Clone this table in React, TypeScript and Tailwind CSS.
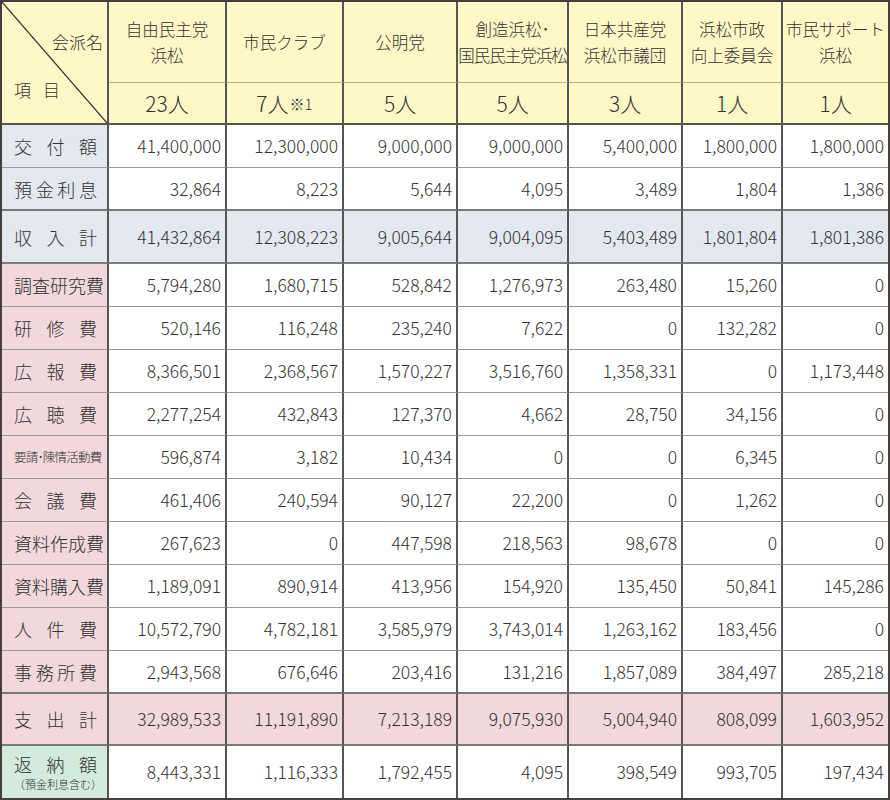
import React from "react";

type RowKind = "base" | "income" | "expense" | "expenseTotal" | "refund";

interface Row {
  label: string;
  kind: RowKind;
  values: string[];
  thick?: boolean;
  note?: string;
  small?: boolean;
}

const parties = [
  ["自由民主党", "浜松"],
  ["市民クラブ"],
  ["公明党"],
  ["創造浜松･", "国民民主党浜松"],
  ["日本共産党", "浜松市議団"],
  ["浜松市政", "向上委員会"],
  ["市民サポート", "浜松"],
];

const members = ["23", "7", "5", "5", "3", "1", "1"];

const rows: Row[] = [
  { label: "交付額", kind: "base", values: ["41,400,000", "12,300,000", "9,000,000", "9,000,000", "5,400,000", "1,800,000", "1,800,000"] },
  { label: "預金利息", kind: "base", thick: true, values: ["32,864", "8,223", "5,644", "4,095", "3,489", "1,804", "1,386"] },
  { label: "収入計", kind: "income", thick: true, values: ["41,432,864", "12,308,223", "9,005,644", "9,004,095", "5,403,489", "1,801,804", "1,801,386"] },
  { label: "調査研究費", kind: "expense", values: ["5,794,280", "1,680,715", "528,842", "1,276,973", "263,480", "15,260", "0"] },
  { label: "研修費", kind: "expense", values: ["520,146", "116,248", "235,240", "7,622", "0", "132,282", "0"] },
  { label: "広報費", kind: "expense", values: ["8,366,501", "2,368,567", "1,570,227", "3,516,760", "1,358,331", "0", "1,173,448"] },
  { label: "広聴費", kind: "expense", values: ["2,277,254", "432,843", "127,370", "4,662", "28,750", "34,156", "0"] },
  { label: "要請･陳情活動費", kind: "expense", small: true, values: ["596,874", "3,182", "10,434", "0", "0", "6,345", "0"] },
  { label: "会議費", kind: "expense", values: ["461,406", "240,594", "90,127", "22,200", "0", "1,262", "0"] },
  { label: "資料作成費", kind: "expense", values: ["267,623", "0", "447,598", "218,563", "98,678", "0", "0"] },
  { label: "資料購入費", kind: "expense", values: ["1,189,091", "890,914", "413,956", "154,920", "135,450", "50,841", "145,286"] },
  { label: "人件費", kind: "expense", values: ["10,572,790", "4,782,181", "3,585,979", "3,743,014", "1,263,162", "183,456", "0"] },
  { label: "事務所費", kind: "expense", thick: true, values: ["2,943,568", "676,646", "203,416", "131,216", "1,857,089", "384,497", "285,218"] },
  { label: "支出計", kind: "expenseTotal", thick: true, values: ["32,989,533", "11,191,890", "7,213,189", "9,075,930", "5,004,940", "808,099", "1,603,952"] },
  { label: "返納額", kind: "refund", note: "（預金利息含む）", values: ["8,443,331", "1,116,333", "1,792,455", "4,095", "398,549", "993,705", "197,434"] },
];

const labelBg: Record<RowKind, string> = {
  base: "bg-[#e3e8ef]",
  income: "bg-[#e3e8ef]",
  expense: "bg-[#f1d8dd]",
  expenseTotal: "bg-[#f1d8dd]",
  refund: "bg-[#d4eadc]",
};

const valueBg: Record<RowKind, string> = {
  base: "bg-white",
  income: "bg-[#e3e8ef]",
  expense: "bg-white",
  expenseTotal: "bg-[#f1d8dd]",
  refund: "bg-white",
};

function SpreadLabel({ text }: { text: string }) {
  return (
    <div className="flex justify-between pl-[12px] pr-[10px] text-[18px] leading-none">
      {text.split("").map((c, i) => (
        <span key={i}>{c}</span>
      ))}
    </div>
  );
}

export default function App() {
  const font = { fontFamily: '"Noto Sans CJK JP", "Noto Sans", sans-serif' };

  return (
    <div className="w-[890px] bg-white text-[#333]" style={font}>
      <div className="grid grid-cols-[107px_118px_117px_114px_111px_114px_100px_105px] grid-rows-[81px_42px_43px_43px_53px_repeat(10,43px)_52px_52px] border-2 border-[#463d3d] font-light">
        {/* corner cell */}
        <div className="relative row-span-2 bg-[#fef8c6] border-r-2 border-r-[#555] border-b-2 border-b-[#555]">
          <svg className="absolute inset-0 h-full w-full" preserveAspectRatio="none" viewBox="0 0 100 100">
            <line x1="0" y1="0" x2="100" y2="100" stroke="#333" strokeWidth="1.2" vectorEffect="non-scaling-stroke" />
          </svg>
          <span className="absolute right-[4px] top-[31px] text-[17px] leading-none">会派名</span>
          <span className="absolute left-[12px] top-[79px] text-[17px] leading-none tracking-[12px]">項目</span>
        </div>

        {parties.map((p, i) => (
          <div
            key={i}
            className={`flex flex-col items-center justify-center bg-[#fef8c6] border-b border-b-[#b5b08c] text-[16.5px] leading-[26px] whitespace-nowrap ${i < 6 ? "border-r-2 border-r-[#555]" : ""}`}
          >
            {p.map((line, j) => (
              <span key={j} className={line.length > 6 ? "tracking-[-1px]" : ""}>{line}</span>
            ))}
          </div>
        ))}

        {members.map((m, i) => (
          <div
            key={i}
            className={`flex items-center justify-center bg-[#fef8c6] border-b-2 border-b-[#555] text-[21px] leading-none ${i < 6 ? "border-r-2 border-r-[#555]" : ""}`}
          >
            {m}人
            {i === 1 && <span className="text-[15px] ml-[1px]">※1</span>}
          </div>
        ))}

        {rows.map((row, ri) => {
          const last = ri === rows.length - 1;
          const bottom = last ? "" : row.thick ? "border-b-2 border-b-[#7a7a7a]" : "border-b border-b-[#9a9a9a]";
          return (
            <React.Fragment key={row.label}>
              <div className={`flex flex-col justify-center ${labelBg[row.kind]} border-r-2 border-r-[#555] ${bottom}`}>
                {row.small ? (
                  <div className="pl-[12px] text-[12.5px] tracking-[-0.8px] whitespace-nowrap leading-none">{row.label}</div>
                ) : (
                  <SpreadLabel text={row.label} />
                )}
                {row.note && (
                  <div className="mt-[6px] pl-[12px] text-[11px] leading-none whitespace-nowrap">{row.note}</div>
                )}
              </div>
              {row.values.map((v, vi) => (
                <div
                  key={vi}
                  className={`flex items-center justify-end pr-[4px] text-[17.5px] leading-none ${valueBg[row.kind]} ${bottom} ${vi < 6 ? "border-r-2 border-r-[#555]" : ""}`}
                >
                  {v}
                </div>
              ))}
            </React.Fragment>
          );
        })}
      </div>
    </div>
  );
}
